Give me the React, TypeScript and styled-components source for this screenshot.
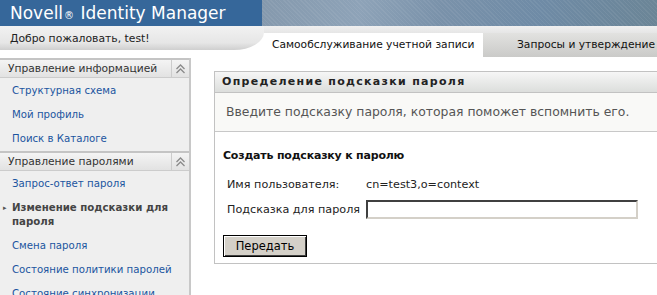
import React from "react";
import styled, { createGlobalStyle } from "styled-components";

const GlobalStyle = createGlobalStyle`
  html, body {
    margin: 0;
    padding: 0;
    background: #ffffff;
    overflow: hidden;
  }
  body {
    font-family: "DejaVu Sans", Verdana, sans-serif;
    font-size: 11px;
  }
`;

const infoLinks = ["Структурная схема", "Мой профиль", "Поиск в Каталоге"];

const passwordLinks = [
  { label: "Запрос-ответ пароля" },
  { label: "Изменение подсказки для пароля", active: true },
  { label: "Смена пароля" },
  { label: "Состояние политики паролей" },
  { label: "Состояние синхронизации" },
];

const ChevronUp = () => (
  <svg width="11" height="10" viewBox="0 0 11 10">
    <path d="M1.5 5 L5.5 1 L9.5 5 M1.5 9 L5.5 5 L9.5 9" fill="none" stroke="#8a8a8a" strokeWidth="1.3" />
  </svg>
);

const App = function App(): JSX.Element {
  return (
    <>
      <GlobalStyle />
      <Page>
        <Banner>
          <Brand>
            Novell<Reg>®</Reg> Identity Manager
          </Brand>
          <Texture />
        </Banner>
        <SubBar>
          <WelcomeArea>
            <Greeting>Добро пожаловать, test!</Greeting>
          </WelcomeArea>
          <TabStrip>
            <Tab $active>Самообслуживание учетной записи</Tab>
            <Tab>Запросы и утверждение</Tab>
          </TabStrip>
        </SubBar>
        <Body>
          <Sidebar>
            <SectionHeader>
              <SectionTitle>Управление информацией</SectionTitle>
              <Toggle>
                <ChevronUp />
              </Toggle>
            </SectionHeader>
            <LinkList>
              {infoLinks.map((l) => (
                <NavLink key={l}>{l}</NavLink>
              ))}
            </LinkList>
            <SectionHeader>
              <SectionTitle>Управление паролями</SectionTitle>
              <Toggle>
                <ChevronUp />
              </Toggle>
            </SectionHeader>
            <LinkList>
              {passwordLinks.map((l) => (
                <NavLink key={l.label} $active={l.active}>
                  {l.label}
                </NavLink>
              ))}
            </LinkList>
          </Sidebar>
          <Main>
            <Panel>
              <PanelTitle>Определение подсказки пароля</PanelTitle>
              <PanelIntro>Введите подсказку пароля, которая поможет вспомнить его.</PanelIntro>
              <PanelBody>
                <FormTitle>Создать подсказку к паролю</FormTitle>
                <FormGrid>
                  <FieldLabel>Имя пользователя:</FieldLabel>
                  <FieldValue>cn=test3,o=context</FieldValue>
                  <FieldLabel>Подсказка для пароля</FieldLabel>
                  <HintInput type="text" />
                </FormGrid>
                <SubmitButton>Передать</SubmitButton>
              </PanelBody>
            </Panel>
          </Main>
        </Body>
      </Page>
    </>
  );
};

const Page = styled.div`
  width: 657px;
  height: 295px;
  overflow: hidden;
  display: flex;
  flex-direction: column;
`;

const Banner = styled.div`
  height: 26px;
  flex: none;
  display: flex;
`;

const Brand = styled.div`
  flex: none;
  width: 252px;
  padding-left: 10px;
  background: #36679a;
  color: #ffffff;
  font-size: 17px;
  line-height: 26px;
  white-space: nowrap;
`;

const Reg = styled.span`
  font-size: 10px;
  margin: 0 1px;
`;

const Texture = styled.div`
  flex: 1;
  background:
    repeating-linear-gradient(45deg, rgba(255, 255, 255, 0.06) 0 1px, transparent 1px 3px),
    linear-gradient(100deg, #8599ad 0%, #8ea3b8 25%, #7a92aa 45%, #6f8ba6 70%, #6b8596 100%);
`;

const SubBar = styled.div`
  height: 32px;
  flex: none;
  display: flex;
`;

const WelcomeArea = styled.div`
  flex: none;
  width: 264px;
  background: #ffffff;
`;

const Greeting = styled.div`
  height: 24px;
  padding-left: 10px;
  font-size: 10.8px;
  line-height: 25px;
  color: #222222;
  background: linear-gradient(#f2f2f2, #e6e6e6 70%, #cfcfcf);
  border-bottom-right-radius: 30px 18px;
  white-space: nowrap;
`;

const TabStrip = styled.div`
  flex: 1;
  min-width: 0;
  display: flex;
  padding-top: 7px;
  background: linear-gradient(#f0f0f0, #e6e6e6 7px, #ffffff 7px);
`;

const Tab = styled.div<{ $active?: boolean }>`
  height: 24px;
  line-height: 24px;
  font-size: 10.7px;
  white-space: nowrap;
  overflow: hidden;
  color: #111111;
  box-sizing: border-box;
  flex: ${(p) => (p.$active ? "0 0 219px" : "1")};
  padding-left: ${(p) => (p.$active ? "8px" : "34px")};
  background: ${(p) => (p.$active ? "#ffffff" : "linear-gradient(#e2e2e0, #cacac8)")};
`;

const Body = styled.div`
  flex: 1;
  display: flex;
  min-height: 0;
`;

const Sidebar = styled.div`
  flex: none;
  width: 189px;
  background: #efefef;
  border-right: 2px solid #c8c8c8;
`;

const SectionHeader = styled.div`
  height: 17px;
  display: flex;
  border-top: 2px solid #c4c4c4;
  border-bottom: 1px solid #cccccc;
  background: linear-gradient(#f4f4f4, #e2e2e2);
`;

const SectionTitle = styled.div`
  flex: 1;
  padding-left: 8px;
  font-size: 10.7px;
  line-height: 17px;
  color: #333333;
  white-space: nowrap;
`;

const Toggle = styled.div`
  width: 17px;
  border-left: 1px solid #cccccc;
  display: flex;
  align-items: center;
  justify-content: center;
`;

const LinkList = styled.div`
  display: flex;
  flex-direction: column;
  padding-top: 1px;
`;

const NavLink = styled.div<{ $active?: boolean }>`
  position: relative;
  padding: 5px 6px 5px 12px;
  font-size: 10.2px;
  line-height: 14px;
  color: ${(p) => (p.$active ? "#444444" : "#1b55a0")};
  font-weight: ${(p) => (p.$active ? "bold" : "normal")};

  &::before {
    content: ${(p) => (p.$active ? '"▸"' : "none")};
    position: absolute;
    left: 3px;
    top: 5px;
    font-size: 7px;
    color: #555555;
  }
`;

const Main = styled.div`
  flex: 1;
  padding: 13px 0 0 23px;
`;

const Panel = styled.div`
  width: 480px;
  height: 191px;
  border: 1px solid #c2c2c2;
  display: flex;
  flex-direction: column;
`;

const PanelTitle = styled.div`
  height: 20px;
  line-height: 20px;
  padding-left: 7px;
  font-weight: bold;
  letter-spacing: 1.3px;
  color: #222222;
  background: linear-gradient(#f6f6f6, #dcdedc);
  border-bottom: 1px solid #c2c2c2;
  white-space: nowrap;
`;

const PanelIntro = styled.div`
  height: 38px;
  line-height: 38px;
  padding-left: 11px;
  font-size: 12.4px;
  color: #555555;
  background: #f9f9f7;
  border-bottom: 1px solid #c8c8c8;
  white-space: nowrap;
`;

const PanelBody = styled.div`
  padding: 16px 8px 0;
`;

const FormTitle = styled.div`
  font-size: 11px;
  line-height: 15px;
  letter-spacing: -0.2px;
  font-weight: bold;
  color: #111111;
  margin-bottom: 12px;
`;

const FormGrid = styled.div`
  display: grid;
  grid-template-columns: 139px 272px;
  row-gap: 6px;
  align-items: center;
  padding-left: 4px;
`;

const FieldLabel = styled.div`
  font-size: 11.2px;
  color: #222222;
  line-height: 19px;
  white-space: nowrap;
`;

const FieldValue = styled.div`
  font-size: 11.2px;
  color: #222222;
`;

const HintInput = styled.input`
  box-sizing: border-box;
  width: 272px;
  height: 19px;
  margin: 0;
  padding: 0 2px;
  border: 2px solid;
  border-color: #404040 #d4d0c8 #d4d0c8 #404040;
  background: #ffffff;
  outline: none;
`;

const SubmitButton = styled.button`
  margin-top: 16px;
  width: 84px;
  height: 22px;
  padding: 0;
  font-family: "DejaVu Sans", Verdana, sans-serif;
  font-size: 11.5px;
  color: #000000;
  background: #d4d0c8;
  border: 1px solid #000000;
  box-shadow: inset 1px 1px 0 #ffffff, inset -1px -1px 0 #404040;
  cursor: pointer;
`;

export default App;
